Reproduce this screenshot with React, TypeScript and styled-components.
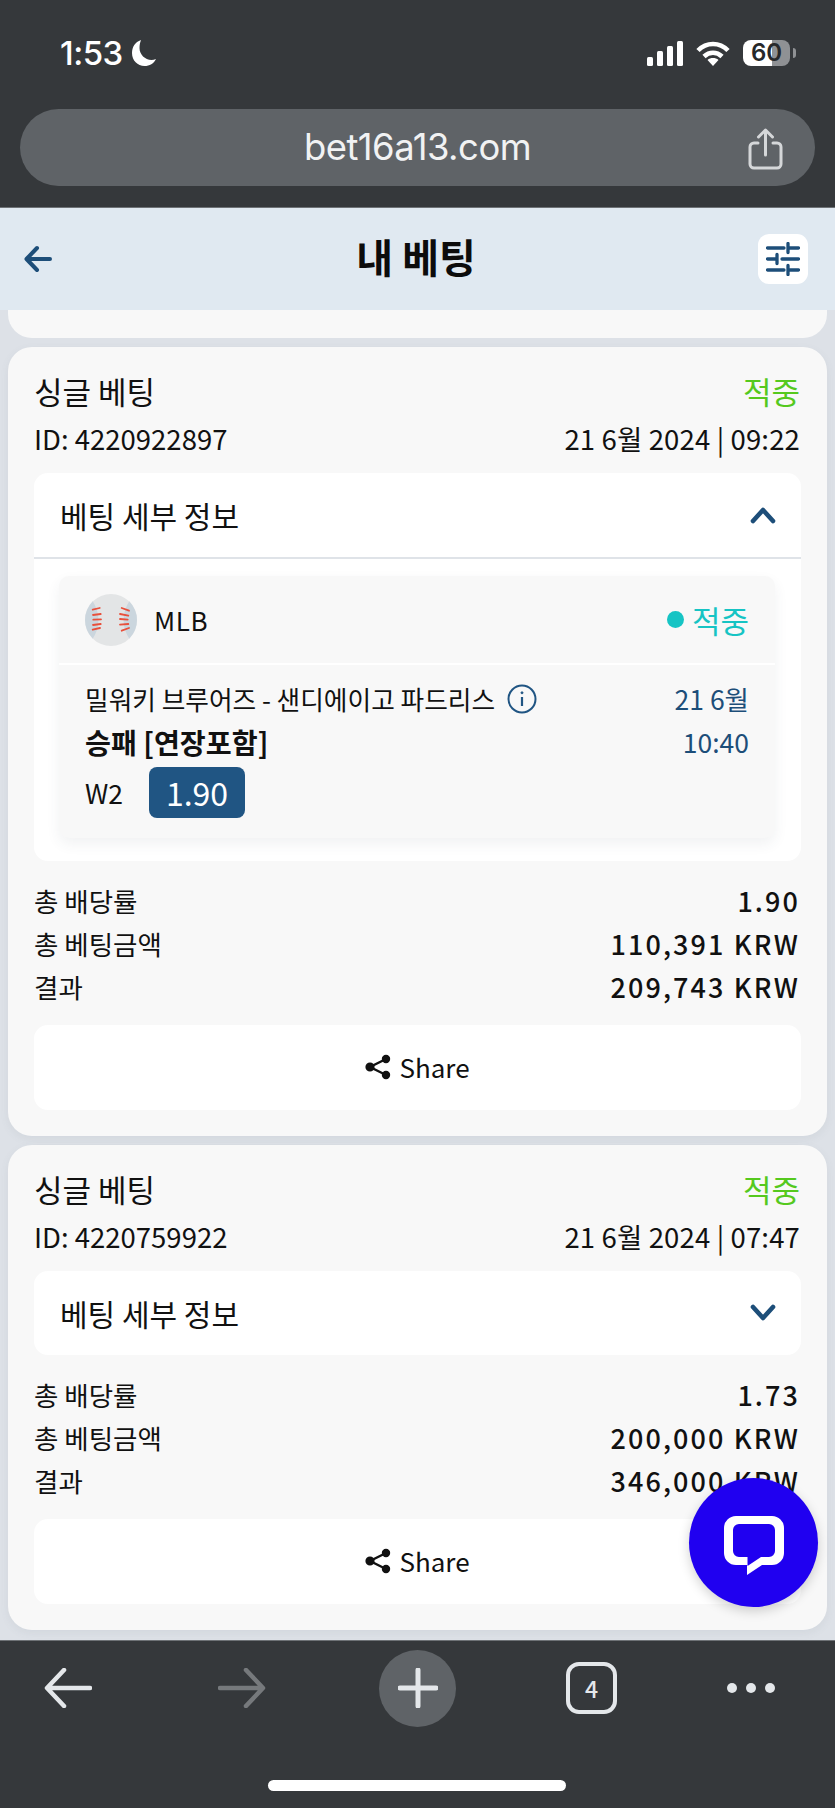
import React from "react";
import styled, { createGlobalStyle } from "styled-components";

const KR = `"Noto Sans CJK KR", "Noto Sans", sans-serif`;
const NAVY = "#1d4e79";

const GlobalStyle = createGlobalStyle`
  html, body { margin: 0; padding: 0; background: #35383b; }
  * { box-sizing: border-box; }
`;

const Screen = styled.div`
  width: 835px;
  height: 1808px;
  position: relative;
  display: flex;
  flex-direction: column;
  overflow: hidden;
  background: #dde1e7;
  font-family: ${KR};
  color: #111;
`;

const BrowserTop = styled.div`
  height: 208px;
  flex: none;
  background: #35383b;
  padding: 36px 20px 0 20px;
  border-bottom: 1px solid #6e7276;
`;

const StatusBar = styled.div`
  height: 34px;
  display: flex;
  align-items: center;
  justify-content: space-between;
  padding: 0 25px 0 40px;
  color: #fff;
`;

const Time = styled.div`
  display: flex;
  align-items: center;
  gap: 8px;
  font: 500 33px/34px Inter, sans-serif;
  letter-spacing: -0.5px;
`;

const StatusIcons = styled.div`
  display: flex;
  align-items: center;
  gap: 13px;
`;

const Battery = styled.div`
  width: 47px;
  height: 26px;
  border-radius: 8px;
  background: linear-gradient(90deg, #fff 0 29px, #8f9194 29px);
  color: #26282a;
  font: 600 24px/26px Inter, sans-serif;
  text-align: center;
  position: relative;
  &::after {
    content: "";
    position: absolute;
    right: -6px;
    top: 8px;
    width: 3px;
    height: 10px;
    border-radius: 0 3px 3px 0;
    background: #8f9194;
  }
`;

const UrlBar = styled.div`
  height: 77px;
  margin-top: 39px;
  border-radius: 39px;
  background: #5f6367;
  position: relative;
  display: flex;
  align-items: center;
  justify-content: center;
  padding-bottom: 2px;
  color: #f1f2f3;
  font: 400 36.4px/40px Inter, sans-serif;
  letter-spacing: -0.5px;
`;

const UrlShare = styled.svg`
  position: absolute;
  right: 32px;
  top: 19px;
`;

const PageHeader = styled.header`
  height: 102px;
  flex: none;
  display: grid;
  grid-template-columns: 1fr auto 1fr;
  align-items: center;
  padding: 0 27px 0 24px;
  background: #e0e9f1;
`;

const PageTitle = styled.h1`
  margin: 0 0 6px;
  font: 700 40px/44px ${KR};
  color: #0c0c0c;
`;

const FilterButton = styled.div`
  justify-self: end;
  width: 50px;
  height: 50px;
  border-radius: 11px;
  background: #fff;
  display: flex;
  align-items: center;
  justify-content: center;
`;

const Content = styled.main`
  flex: 1;
  min-height: 0;
  overflow: hidden;
  display: flex;
  flex-direction: column;
  gap: 9px;
  padding: 0 8px;
`;

const CardTail = styled.div`
  height: 28px;
  flex: none;
  background: #f8f8f8;
  border-radius: 0 0 24px 24px;
`;

const Card = styled.section`
  flex: none;
  background: #f8f8f8;
  border-radius: 24px;
  padding: 26px 27px 26px 26px;
  box-shadow: 0 3px 8px rgba(90, 100, 115, 0.08);
`;

const Row = styled.div`
  display: flex;
  align-items: center;
  justify-content: space-between;
`;

const CardTitle = styled(Row)`
  height: 40px;
  padding-bottom: 4px;
  font-size: 31px;
  line-height: 36px;
`;

const WinLabel = styled.span`
  color: #55c91e;
`;

const IdRow = styled(Row)`
  height: 36px;
  margin-top: 9px;
  padding-bottom: 4px;
  font-size: 27.5px;
  line-height: 32px;
`;

const WhenText = styled.span`
  letter-spacing: 0.15px;
`;

const Accordion = styled.div`
  margin-top: 15px;
  margin-right: -1px;
  background: #fff;
  border-radius: 14px;
  overflow: hidden;
`;

const AccordionHead = styled(Row)<{ $open?: boolean }>`
  height: ${(p) => (p.$open ? 86 : 84)}px;
  padding: 0 25px 0 26px;
  font-size: 30px;
  border-bottom: ${(p) => (p.$open ? "2px solid #dfe3e8" : "none")};
`;

const AccordionBody = styled.div`
  padding: 17px 26px 23px 25px;
`;

const BetCard = styled.div`
  background: #f8f8f8;
  border-radius: 10px;
  box-shadow: 0 6px 14px rgba(60, 70, 85, 0.07);
`;

const BetHead = styled(Row)`
  height: 89px;
  padding: 0 26px;
  border-bottom: 2px solid #fff;
`;

const League = styled.div`
  display: flex;
  align-items: center;
  gap: 17px;
  font-size: 26px;
  letter-spacing: 0.6px;
`;

const BetStatus = styled.div`
  display: flex;
  align-items: center;
  gap: 8px;
  font-size: 31px;
  color: #16c4c4;
`;

const Dot = styled.i`
  width: 17px;
  height: 17px;
  border-radius: 50%;
  background: #16c4c4;
`;

const BetBody = styled.div`
  padding: 12px 26px 20px;
  display: flex;
  justify-content: space-between;
`;

const BetLeft = styled.div`
  display: flex;
  flex-direction: column;
`;

const BetLine = styled.div`
  height: 43px;
  display: flex;
  align-items: center;
  gap: 12px;
  font-size: 25.7px;
  white-space: nowrap;
`;

const Market = styled(BetLine)`
  font-size: 28.2px;
  font-weight: 700;
`;

const Pick = styled.div`
  margin-top: 4px;
  display: flex;
  align-items: center;
  gap: 26px;
  font-size: 26.5px;
`;

const Odd = styled.div`
  width: 96px;
  height: 51px;
  border-radius: 8px;
  background: #205583;
  color: #fff;
  font-size: 32px;
  line-height: 51px;
  text-align: center;
`;

const BetDate = styled.div`
  display: flex;
  flex-direction: column;
  align-items: flex-end;
  font-size: 26.5px;
  line-height: 43px;
  color: ${NAVY};
`;

const Totals = styled.div`
  margin-top: 20px;
`;

const TotalRow = styled(Row)`
  height: 43px;
  padding-bottom: 5px;
  font-size: 26.5px;
`;

const TotalValue = styled.b`
  font-size: 27px;
  font-weight: 500;
  letter-spacing: 2.1px;
`;

const ShareButton = styled.div`
  margin-top: 15px;
  margin-right: -1px;
  height: 85px;
  padding-bottom: 2px;
  background: #fff;
  border-radius: 14px;
  display: flex;
  align-items: center;
  justify-content: center;
  gap: 8px;
  font-size: 26px;
`;

const ChatBubble = styled.div`
  position: absolute;
  left: 689px;
  top: 1478px;
  width: 129px;
  height: 129px;
  border-radius: 50%;
  background: #2000f0;
  box-shadow: 0 4px 12px rgba(0, 0, 0, 0.18);
  display: flex;
  align-items: center;
  justify-content: center;
  padding-top: 7px;
`;

const BrowserBottom = styled.footer`
  height: 168px;
  flex: none;
  background: #35383b;
  border-top: 1px solid #6e7276;
  padding: 8px 60px 0 44px;
`;

const NavRow = styled.div`
  height: 78px;
  display: grid;
  grid-template-columns: 174px 161px 187px 161px auto;
  align-items: center;
`;

const PlusCircle = styled.div`
  width: 77px;
  height: 77px;
  border-radius: 50%;
  background: #5f6367;
  display: flex;
  align-items: center;
  justify-content: center;
`;

const TabCount = styled.div`
  width: 51px;
  height: 52px;
  border: 4px solid #e4e7ea;
  border-radius: 13px;
  color: #e4e7ea;
  font: 500 23px/44px ${KR};
  text-align: center;
`;

const HomeBar = styled.div`
  width: 298px;
  height: 11px;
  margin: 53px 0 0 224px;
  border-radius: 6px;
  background: #fff;
`;

const ChevronUp = () => (
  <svg width="26" height="18" viewBox="0 0 26 18" fill="none" stroke={NAVY} strokeWidth="4.6" strokeLinecap="round" strokeLinejoin="round">
    <path d="M3 15 13 4l10 11" />
  </svg>
);

const ChevronDown = () => (
  <svg width="26" height="18" viewBox="0 0 26 18" fill="none" stroke={NAVY} strokeWidth="4.6" strokeLinecap="round" strokeLinejoin="round">
    <path d="M3 3l10 11L23 3" />
  </svg>
);

const ShareGlyph = () => (
  <svg width="26" height="26" viewBox="0 0 26 26" fill="#111" stroke="#111" strokeWidth="2.4">
    <path d="M21 5 5 13l16 8" fill="none" />
    <circle cx="21" cy="5" r="3.4" strokeWidth="1.6" />
    <circle cx="5" cy="13" r="3.8" strokeWidth="1.6" />
    <circle cx="21" cy="21" r="3.4" strokeWidth="1.6" />
  </svg>
);

const Baseball = () => (
  <svg width="52" height="52" viewBox="0 0 52 52">
    <defs>
      <clipPath id="ball">
        <circle cx="26" cy="26" r="26" />
      </clipPath>
    </defs>
    <circle cx="26" cy="26" r="26" fill="#e3e5e6" />
    <g clipPath="url(#ball)" fill="#cbd6de">
      <path d="M0 6h7q13 20 0 40H0Z" />
      <path d="M52 6h-7q-13 20 0 40h7Z" />
    </g>
    <path
      d="M7.700 15.700 14.700 14M8 21l7.700-1M8.300 25.700l7.700-.4M8 31l7.700-1M7.700 35.700l7.300-1.700M44 16.700 36.700 14M43.300 21.700 35 20M42.700 25.700 35 25M43.300 30l-8.300.7M44 34l-7.300 2.700"
      fill="none"
      stroke="#e8503c"
      strokeWidth="1.800"
      strokeLinecap="round"
    />
  </svg>
);

const InfoIcon = () => (
  <svg width="30" height="30" viewBox="0 0 30 30" fill="none" stroke="#205583" strokeWidth="2">
    <circle cx="15" cy="15" r="13.500" />
    <path d="M15 13v9" strokeWidth="2.200" />
    <circle cx="15" cy="8.800" r="1" fill="#205583" strokeWidth="1" />
  </svg>
);

type BetProps = {
  id: string;
  when: string;
  odds: string;
  stake: string;
  result: string;
  open?: boolean;
};

const BetEntry = ({ id, when, odds, stake, result, open }: BetProps) => (
  <Card>
    <CardTitle>
      <span>싱글 베팅</span>
      <WinLabel>적중</WinLabel>
    </CardTitle>
    <IdRow>
      <span>ID: {id}</span>
      <WhenText>{when}</WhenText>
    </IdRow>
    <Accordion>
      <AccordionHead $open={open}>
        <span>베팅 세부 정보</span>
        {open ? <ChevronUp /> : <ChevronDown />}
      </AccordionHead>
      {open && (
        <AccordionBody>
          <BetCard>
            <BetHead>
              <League>
                <Baseball />
                MLB
              </League>
              <BetStatus>
                <Dot />
                적중
              </BetStatus>
            </BetHead>
            <BetBody>
              <BetLeft>
                <BetLine>
                  밀워키 브루어즈 - 샌디에이고 파드리스
                  <InfoIcon />
                </BetLine>
                <Market>승패 [연장포함]</Market>
                <Pick>
                  W2
                  <Odd>1.90</Odd>
                </Pick>
              </BetLeft>
              <BetDate>
                <span>21 6월</span>
                <span>10:40</span>
              </BetDate>
            </BetBody>
          </BetCard>
        </AccordionBody>
      )}
    </Accordion>
    <Totals>
      <TotalRow>
        <span>총 배당률</span>
        <TotalValue>{odds}</TotalValue>
      </TotalRow>
      <TotalRow>
        <span>총 베팅금액</span>
        <TotalValue>{stake}</TotalValue>
      </TotalRow>
      <TotalRow>
        <span>결과</span>
        <TotalValue>{result}</TotalValue>
      </TotalRow>
    </Totals>
    <ShareButton>
      <ShareGlyph />
      Share
    </ShareButton>
  </Card>
);

export default function App() {
  return (
    <Screen>
      <GlobalStyle />
      <BrowserTop>
        <StatusBar>
          <Time>
            1:53
            <svg width="26" height="28" viewBox="0 0 26 28" fill="#fff">
              <path d="M10 1C4 3 1 8 1 14c0 7.500 5.500 13 12.500 13 5 0 9.500-2.500 11.500-7-1.500.6-3 .9-4.500.9C14 20.900 8.500 15.500 8.500 9c0-3 .5-5.500 1.500-8Z" />
            </svg>
          </Time>
          <StatusIcons>
            <svg width="36" height="25" viewBox="0 0 36 25" fill="#fff">
              <rect x="0" y="16" width="6" height="9" rx="1.500" />
              <rect x="10" y="10" width="6" height="15" rx="1.500" />
              <rect x="20" y="5" width="6" height="20" rx="1.500" />
              <rect x="30" y="0" width="6" height="25" rx="1.500" />
            </svg>
            <svg width="34" height="25" viewBox="0 0 34 25" fill="none" stroke="#fff" strokeWidth="4.600">
              <path d="M2 9.500c8.500-8.700 21.500-8.700 30 0" />
              <path d="M8 15.500c5.300-5 12.700-5 18 0" />
              <path d="M17 25l-5.500-6c3-2.600 8-2.600 11 0Z" fill="#fff" stroke="none" />
            </svg>
            <Battery>60</Battery>
          </StatusIcons>
        </StatusBar>
        <UrlBar>
          bet16a13.com
          <UrlShare width="35" height="42" viewBox="0 0 35 42" fill="none" stroke="#d5d7d9" strokeWidth="3" strokeLinecap="round" strokeLinejoin="round">
            <path d="M10 15H6a4 4 0 0 0-4 4v17a4 4 0 0 0 4 4h23a4 4 0 0 0 4-4V19a4 4 0 0 0-4-4h-4" />
            <path d="M17.500 27V2M10.500 9l7-7 7 7" />
          </UrlShare>
        </UrlBar>
      </BrowserTop>
      <PageHeader>
        <svg width="28" height="28" viewBox="0 0 28 28" fill="none" stroke={NAVY} strokeWidth="4" strokeLinecap="round" strokeLinejoin="round">
          <path d="M26 14H3M13 3 2.500 14 13 25" />
        </svg>
        <PageTitle>내 베팅</PageTitle>
        <FilterButton>
          <svg width="34" height="34" viewBox="0 0 34 34" fill="none" stroke={NAVY} strokeWidth="3.300" strokeLinecap="round">
            <path d="M1.500 6h16.500M23 6h9.500M22 1.500v9M1.500 17H11M16 17h16.500M11 12.500v9M1.500 28H18M23 28h9.500M22 23.500v9" />
          </svg>
        </FilterButton>
      </PageHeader>
      <Content>
        <CardTail />
        <BetEntry id="4220922897" when="21 6월 2024 | 09:22" odds="1.90" stake="110,391 KRW" result="209,743 KRW" open />
        <BetEntry id="4220759922" when="21 6월 2024 | 07:47" odds="1.73" stake="200,000 KRW" result="346,000 KRW" />
      </Content>
      <BrowserBottom>
        <NavRow>
          <svg width="48" height="40" viewBox="0 0 48 40" fill="none" stroke="#e4e7ea" strokeWidth="4.500" strokeLinecap="round" strokeLinejoin="round">
            <path d="M46 20H4M20 2 3 20l17 18" />
          </svg>
          <svg width="48" height="40" viewBox="0 0 48 40" fill="none" stroke="#76797c" strokeWidth="4.500" strokeLinecap="round" strokeLinejoin="round">
            <path d="M2 20h42M28 2l17 18-17 18" />
          </svg>
          <PlusCircle>
            <svg width="40" height="40" viewBox="0 0 40 40" fill="none" stroke="#e4e7ea" strokeWidth="5" strokeLinecap="round">
              <path d="M2 20h36M20 2v36" />
            </svg>
          </PlusCircle>
          <TabCount>4</TabCount>
          <svg width="48" height="12" viewBox="0 0 48 12" fill="#e4e7ea">
            <circle cx="5" cy="6" r="5" />
            <circle cx="24" cy="6" r="5" />
            <circle cx="43" cy="6" r="5" />
          </svg>
        </NavRow>
        <HomeBar />
      </BrowserBottom>
      <ChatBubble>
        <svg width="60" height="60" viewBox="0 0 60 60" fill="#fff" fillRule="evenodd">
          <path d="M12 0H48a12 12 0 0 1 12 12V37a12 12 0 0 1-12 12H38L23 59V49H12A12 12 0 0 1 0 37V12A12 12 0 0 1 12 0ZM15 8a6 6 0 0 0-6 6V35a6 6 0 0 0 6 6h8.500v9L37 41h8a6 6 0 0 0 6-6V14a6 6 0 0 0-6-6Z" />
        </svg>
      </ChatBubble>
    </Screen>
  );
}
